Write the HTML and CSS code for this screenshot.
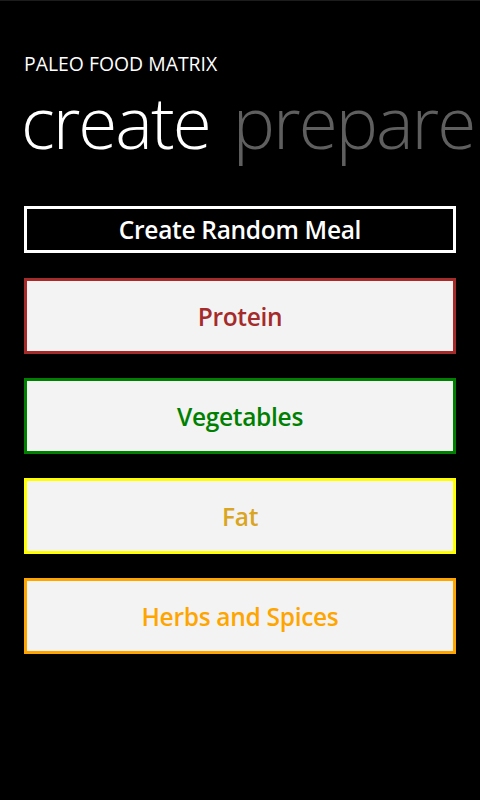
FILE: index.html
```html
<!DOCTYPE html>
<html lang="en">
<head>
  <meta charset="UTF-8" />
  <meta name="viewport" content="width=device-width, initial-scale=1.0"/>
  <title>Paleo Food Matrix</title>
  <link rel="stylesheet" href="styles.css">
</head>
<body>
  <div class="page">
    <div class="app-title">PALEO FOOD MATRIX</div>
    <div class="pivot-headers">
      <span class="pivot-header active">create</span>
      <span class="pivot-header">prepare</span>
    </div>
    <div class="pivot-item">
      <button class="meal-btn">Create Random Meal</button>
      <button class="group protein">Protein</button>
      <button class="group vegetables">Vegetables</button>
      <button class="group fat">Fat</button>
      <button class="group herbs">Herbs and Spices</button>
    </div>
  </div>
</body>
</html>
```

FILE: styles.css
```css
html, body { margin: 0; padding: 0; background: #000; }
body { font-family: "Segoe WP", "Open Sans", "Noto Sans", sans-serif; color: #fff; min-height: 100vh; border-top: 1px solid #1c1c1c; box-sizing: border-box; }
.page { padding: 0 24px; overflow: hidden; }
.app-title { margin-top: 53px; font-size: 19.4px; line-height: 20px; }
.pivot-headers { display: flex; gap: 23px; white-space: nowrap; font-size: 71px; font-weight: 300; line-height: 71px; letter-spacing: -2px; margin-top: 12px; margin-left: -3px; }
.pivot-header { color: #5f5f5f; }
.pivot-header.active { color: #fff; }
.pivot-item { display: flex; flex-direction: column; gap: 24px; margin-top: 49px; }
button { font-family: inherit; font-weight: 600; font-size: 24.5px; letter-spacing: -0.3px; width: 100%; box-sizing: border-box; border-width: 3px; border-style: solid; cursor: pointer; padding: 0; }
.meal-btn { height: 47px; background: #000; color: #fff; border-color: #fff; margin-bottom: 1px; }
.group { height: 76px; background: #f3f3f3; }
.protein { color: #a52a2a; border-color: #a52a2a; }
.vegetables { color: #008000; border-color: #008000; }
.fat { color: #daa520; border-color: #ffff00; }
.herbs { color: #ffa500; border-color: #ffa500; }
```
